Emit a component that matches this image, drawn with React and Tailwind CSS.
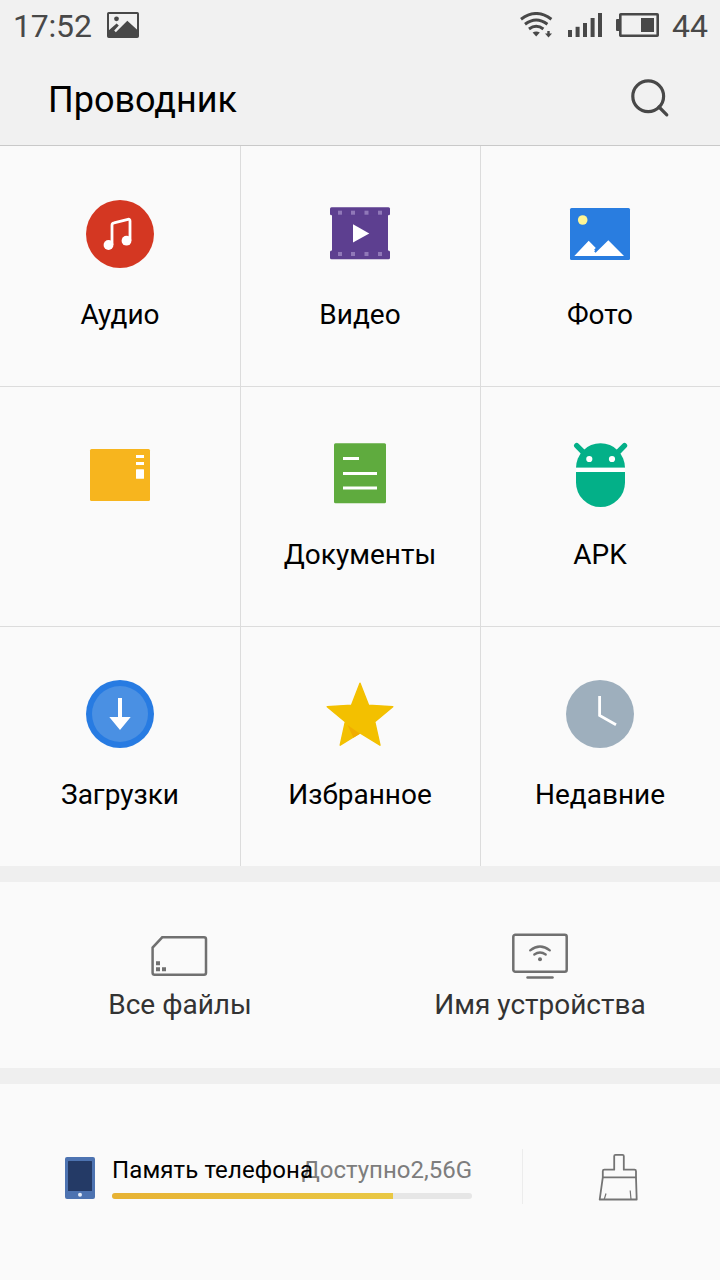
const AudioIcon = () => (
  <svg className="size-18" viewBox="0 0 72 72" fill="none">
    <circle cx="36" cy="36" r="34" fill="#d43722" />
    <path
      d="M28 47V27.2Q28 25.2 30 24.8L44 21.3Q46 20.9 46 22.9V42.7"
      stroke="#fff"
      strokeWidth="2.8"
    />
    <circle cx="24.5" cy="47" r="4.9" fill="#fff" />
    <circle cx="42.5" cy="42.7" r="4.9" fill="#fff" />
  </svg>
);

const VideoIcon = () => (
  <svg className="size-18" viewBox="0 0 72 72">
    <rect x="8" y="10" width="56" height="51" fill="#5d3f90" />
    <rect x="6" y="9.2" width="60" height="8" rx="1.5" fill="#5d3f90" />
    <rect x="6" y="52.5" width="60" height="8.8" rx="1.5" fill="#5d3f90" />
    {[14, 27, 40.5, 54].map((x) => (
      <g key={x} fill="#9078b8">
        <rect x={x} y="12.7" width="4" height="4" />
        <rect x={x} y="54" width="4" height="4" />
      </g>
    ))}
    <path d="M29 26.3L45.3 35.4L29 44.5Z" fill="#fff" />
  </svg>
);

const PhotoIcon = () => (
  <svg className="size-18" viewBox="0 0 72 72">
    <rect x="6" y="10" width="60" height="52" rx="1.5" fill="#297de0" />
    <circle cx="18.7" cy="22" r="4.8" fill="#fef594" />
    <path
      d="M10.3 58L24.7 42.8L31.8 50L30.2 51.6L31 52.4L30.2 53.6L31.6 54.8L44.3 42.3L60 58Z"
      fill="#fff"
    />
  </svg>
);

const ArchiveIcon = () => (
  <svg className="size-18" viewBox="0 0 72 72">
    <rect x="6" y="11" width="60" height="52" rx="1.5" fill="#f7b51e" />
    <rect x="52" y="17" width="8" height="3" fill="#fff" />
    <rect x="52" y="24" width="8" height="3" fill="#fff" />
    <rect x="52" y="31.2" width="8" height="9.6" rx="0.5" fill="#fff" />
  </svg>
);

const DocumentIcon = () => (
  <svg className="size-18" viewBox="0 0 72 72">
    <rect x="10" y="5.2" width="52" height="60" rx="1.5" fill="#5fab3e" />
    <rect x="19" y="19" width="16" height="3" fill="#fff" />
    <rect x="19" y="34" width="34" height="3" fill="#fff" />
    <rect x="19" y="48.5" width="34" height="3" fill="#fff" />
  </svg>
);

const ApkIcon = () => (
  <svg className="size-18" viewBox="0 0 72 72">
    <path
      d="M12.7 7.7L20 15M60.5 7.7L53.2 15"
      stroke="#03b088"
      strokeWidth="5.4"
      strokeLinecap="round"
    />
    <path d="M12 29.8A24.5 24.6 0 0 1 61 29.8Z" fill="#03b088" />
    <path d="M12 34H61V44.5A24.5 24.5 0 0 1 12 44.5Z" fill="#03b088" />
    <circle cx="25.3" cy="21" r="3.1" fill="#fff" />
    <circle cx="48" cy="21" r="3.1" fill="#fff" />
    <rect x="12" y="29.8" width="49" height="4.2" fill="#fff" />
  </svg>
);

const DownloadIcon = () => (
  <svg className="size-18" viewBox="0 0 72 72">
    <circle cx="36" cy="36" r="34" fill="#277be2" />
    <circle cx="36" cy="36" r="28" fill="#4a90e3" />
    <path d="M34 20H38V39H46.7L36 52L25.3 39H34Z" fill="#fff" />
  </svg>
);

const StarIcon = () => (
  <svg className="size-18" viewBox="0 0 72 72">
    <path
      d="M36 5.2L44.5 27.1L68.8 28.7L50.8 43.8L56 67.2L36 54.8L16.2 67.2L21.3 43.8L3.2 28.7L27.6 27.1Z"
      fill="#f3c000"
      stroke="#f3c000"
      strokeWidth="1.4"
      strokeLinejoin="round"
    />
    <path d="M23.5 47L36 55.7L29.4 59.8Z" fill="#f0ad00" />
  </svg>
);

const RecentIcon = () => (
  <svg className="size-18" viewBox="0 0 72 72" fill="none">
    <circle cx="36" cy="36" r="34" fill="#9eafbd" />
    <path d="M35.6 18V37.5L52 46.8" stroke="#fff" strokeWidth="2.8" />
  </svg>
);

const SdCardIcon = () => (
  <svg className="h-12 w-15" viewBox="0 0 60 48" fill="none">
    <path
      d="M12.2 5.3H54Q56 5.3 56 7.3V40.8Q56 42.8 54 42.8H4.6Q2.6 42.8 2.6 40.8V15.6Z"
      stroke="#707070"
      strokeWidth="2.5"
    />
    <path
      d="M6 29.2H10V33.2H6ZM6 35.2H10V39.2H6ZM12 35.2H16V39.2H12Z"
      fill="#707070"
    />
  </svg>
);

const DeviceIcon = () => (
  <svg
    className="h-12 w-15"
    viewBox="0 0 60 48"
    fill="none"
    stroke="#707070"
    strokeWidth="2.5"
    strokeLinecap="round"
  >
    <rect x="3.3" y="2.8" width="53.4" height="37" rx="2" />
    <path d="M17.5 45.4H42.5" />
    <path d="M20.2 18.3Q30 10.7 39.8 18.3M24.3 22.5Q30 18.5 35.7 22.5" strokeWidth="2.3" />
    <circle cx="30" cy="27.3" r="2" fill="#707070" stroke="none" />
  </svg>
);

const PhoneIcon = () => (
  <svg className="mt-2 ml-[65px] h-[42px] w-[30px] shrink-0" viewBox="0 0 30 42">
    <rect width="30" height="42" rx="2" fill="#4d73b1" />
    <rect x="3" y="4" width="24" height="30" rx="0.5" fill="#243a66" />
    <circle cx="15" cy="37.7" r="2" fill="#e3ebf7" />
  </svg>
);

const BroomIcon = () => (
  <svg
    className="mt-1 ml-[75px] h-12 w-10"
    viewBox="0 0 40 48"
    fill="none"
    stroke="#747474"
    strokeWidth="1.8"
    strokeLinejoin="round"
  >
    <path d="M4.8 24.3V18.2Q4.8 16.7 6.3 16.7H16.2V3.1Q16.2 1.8 17.5 1.8H24.5Q25.8 1.8 25.8 3.1V16.7H36.5Q38 16.7 38 18.2V24.3Z" />
    <path d="M4.8 24.3L1.7 46.5H38.7L38 24.3" />
    <path d="M6.2 46.5L8 40.5M33 46.5L32.2 37.5" strokeWidth="1.2" />
  </svg>
);

const StatusBar = () => (
  <div className="flex h-[50px] items-center text-[32px] leading-[50px] text-[#484848]">
    <span className="ml-[13px] w-[94px] pt-px tracking-[-0.2px]">17:52</span>
    <svg className="h-[26px] w-8" viewBox="0 0 32 26">
      <rect x="1" y="1" width="30" height="24" rx="0.8" fill="none" stroke="#484848" strokeWidth="2" />
      <circle cx="9.5" cy="6.8" r="2.4" fill="#484848" />
      <path d="M1 19L9.6 11.4L11.8 13.5L7.2 18.6L8.8 20.2L20.3 8.8L31 18.4V25H1Z" fill="#484848" />
    </svg>

    <div className="mr-3 ml-auto flex items-center">
      <svg className="h-[26px] w-[33px]" viewBox="0 0 33 26" fill="none" stroke="#484848" strokeWidth="3">
        <path d="M1 7.2Q16.2 -4.2 31.4 7.2M5 12.2Q16.2 3.8 27.4 12.2M9 17Q16.2 11.6 23.4 17" />
        <path d="M12.6 20.6Q16.2 18.4 19.8 20.6L16.2 24.6Z" fill="#484848" stroke="none" />
        <path d="M27.3 19H29.7V21.6H32L28.5 25.6L25 21.6H27.3Z" fill="#484848" stroke="none" />
      </svg>
      <svg className="ml-[15px] h-6 w-[34px]" viewBox="0 0 34 24" fill="#484848">
        <rect x="0" y="17" width="4" height="7" />
        <rect x="7.6" y="13.8" width="4" height="10.2" />
        <rect x="15" y="10" width="4" height="14" />
        <rect x="22.6" y="5" width="4" height="19" />
        <rect x="30" y="0" width="4" height="24" />
      </svg>
      <svg className="ml-3.5 h-6 w-[43px]" viewBox="0 0 43 24" fill="#484848">
        <rect x="0" y="6" width="4" height="12" rx="1" />
        <rect x="4.3" y="1.3" width="37.4" height="21.4" rx="0.5" fill="none" stroke="#484848" strokeWidth="2.6" />
        <rect x="25" y="5" width="13" height="14" />
      </svg>
      <span className="ml-[13px] pt-px">44</span>
    </div>
  </div>
);

const categories = [
  { label: "Аудио", Icon: AudioIcon },
  { label: "Видео", Icon: VideoIcon },
  { label: "Фото", Icon: PhotoIcon },
  { label: "", Icon: ArchiveIcon },
  { label: "Документы", Icon: DocumentIcon },
  { label: "APK", Icon: ApkIcon },
  { label: "Загрузки", Icon: DownloadIcon },
  { label: "Избранное", Icon: StarIcon },
  { label: "Недавние", Icon: RecentIcon },
];

const App = () => {
  return (
    <div className="flex h-[1280px] w-[720px] flex-col overflow-hidden bg-[#efefef] font-[Roboto,sans-serif] text-black">
      {/* Header */}
      <header className="h-[146px] border-b border-[#c9c9c9] bg-[#f1f1f1]">
        <StatusBar />
        <div className="flex h-[95px] items-center justify-between pr-[50px] pb-[3px] pl-12">
          <h1 className="pt-2 text-[36px] leading-10">Проводник</h1>
          <svg className="mt-1.5 size-10" viewBox="0 0 40 40" fill="none" stroke="#484848" strokeWidth="3.2">
            <circle cx="18.2" cy="17.2" r="15.4" />
            <path d="M29 28L36.8 35.8" strokeLinecap="round" />
          </svg>
        </div>
      </header>

      {/* Categories */}
      <main className="grid grid-cols-3 bg-[#fafafa]">
        {categories.map(({ label, Icon }, i) => (
          <div
            key={i}
            className={`flex h-60 flex-col items-center border-[#dcdcdc] ${
              i % 3 ? "border-l pr-px" : ""
            } ${i > 2 ? "border-t pt-[51px]" : "pt-13"}`}
          >
            <Icon />
            <span className="mt-[29px] text-[28px] leading-8">{label}</span>
          </div>
        ))}
      </main>

      {/* Files and device */}
      <section className="mt-4 grid h-[186px] grid-cols-2 bg-[#fafafa] pt-[50px] text-[28px] leading-8 text-[#333]">
        <div className="flex flex-col items-center gap-[9px]">
          <SdCardIcon />
          <span>Все файлы</span>
        </div>
        <div className="flex flex-col items-center gap-[9px]">
          <DeviceIcon />
          <span>Имя устройства</span>
        </div>
      </section>

      {/* Storage */}
      <footer className="mt-4 flex h-[196px] items-start bg-[#fafafa] pt-[65px]">
        <PhoneIcon />
        <div className="mt-[7px] ml-[17px] w-[360px]">
          <div className="flex justify-between text-2xl leading-7 whitespace-nowrap">
            <span className="z-10 w-0 tracking-[0.1px]">Память телефона</span>
            <span className="text-[#7d7d7d]">Доступно2,56G</span>
          </div>
          <div className="mt-[9px] h-1.5 overflow-hidden rounded-full bg-[#e6e6e6]">
            <div className="h-full w-[78%] bg-linear-to-r from-[#e7b233] to-[#e9c844]" />
          </div>
        </div>
        <div className="ml-[50px] h-[55px] w-px bg-[#ececec]" />
        <BroomIcon />
      </footer>
    </div>
  );
};

export default App;
